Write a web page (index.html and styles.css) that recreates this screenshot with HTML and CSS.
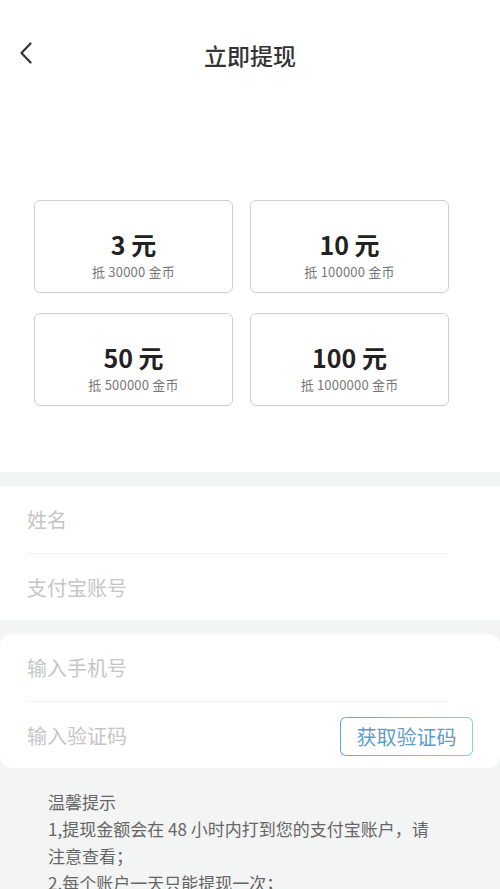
FILE: index.html
```html
<!DOCTYPE html>
<html lang="zh-CN">
<head>
<meta charset="utf-8">
<title>立即提现</title>
<link rel="stylesheet" href="styles.css">
</head>
<body>
<div class="page">
  <header class="header">
    <span class="back">
      <svg width="14" height="22" viewBox="0 0 14 22"><path d="M11.5 1.5 L2.5 11 L11.5 20.5" fill="none" stroke="#333" stroke-width="2.2" stroke-linecap="round" stroke-linejoin="round"/></svg>
    </span>
    <h1 class="title">立即提现</h1>
  </header>

  <section class="options">
    <div class="grid">
      <div class="card"><div class="amount">3 元</div><div class="coins">抵 30000 金币</div></div>
      <div class="card"><div class="amount">10 元</div><div class="coins">抵 100000 金币</div></div>
      <div class="card"><div class="amount">50 元</div><div class="coins">抵 500000 金币</div></div>
      <div class="card"><div class="amount">100 元</div><div class="coins">抵 1000000 金币</div></div>
    </div>
  </section>

  <section class="form">
    <div class="row"><span class="ph">姓名</span></div>
    <div class="row"><span class="ph">支付宝账号</span></div>
  </section>

  <section class="form rounded">
    <div class="row"><span class="ph">输入手机号</span></div>
    <div class="row"><span class="ph">输入验证码</span><span class="code-btn">获取验证码</span></div>
  </section>

  <section class="tips">
    <p>温馨提示</p>
    <p>1,提现金额会在 48 小时内打到您的支付宝账户，请注意查看；</p>
    <p>2,每个账户一天只能提现一次；</p>
  </section>
</div>
</body>
</html>
```

FILE: styles.css
```css
* { box-sizing: border-box; }
html, body { margin: 0; padding: 0; }
body {
  background: #f3f4f4;
  font-family: "Noto Sans CJK SC", "Noto Sans", sans-serif;
  width: 500px;
  height: 889px;
  overflow: hidden;
}
.page { display: flex; flex-direction: column; }

.header {
  position: relative;
  height: 110px;
  background: #fff;
  display: flex;
  align-items: center;
  justify-content: center;
}
.back {
  position: absolute;
  left: 19px;
  top: 42px;
  width: 14px;
  height: 22px;
  display: flex;
}
.title {
  margin: 0;
  font-size: 23px;
  font-weight: 500;
  color: #333;
  line-height: 1;
}

.options {
  background: #fff;
  padding: 90px 0 66px 34px;
}
.grid {
  display: grid;
  grid-template-columns: 199px 199px;
  column-gap: 17px;
  row-gap: 20px;
}
.card {
  height: 93px;
  border: 1px solid #cfcfcf;
  border-radius: 6px;
  display: flex;
  flex-direction: column;
  align-items: center;
  justify-content: flex-start;
  padding-top: 25px;
}
.amount {
  font-size: 25px;
  font-weight: 600;
  color: #222;
  line-height: 36px;
}
.coins {
  font-size: 13px;
  color: #777;
  line-height: 19px;
  letter-spacing: 0.2px;
}

.form {
  background: #fff;
  margin-top: 14px;
  padding: 0 53px 0 27px;
}
.form.rounded { border-radius: 12px; }
.row {
  height: 67px;
  display: flex;
  align-items: center;
  justify-content: space-between;
  position: relative;
}
.row + .row { border-top: 1px solid #f1f1f1; }
.ph {
  font-size: 20px;
  color: #c6c6c6;
}
.code-btn {
  position: relative;
  margin-right: -26px;
  width: 133px;
  height: 39px;
  border: 1.5px solid transparent;
  border-radius: 6px;
  background: linear-gradient(#fff, #fff) padding-box,
              linear-gradient(90deg, #62aadf, #86d8c8) border-box;
  color: #5f9cc9;
  font-size: 20px;
  display: flex;
  align-items: center;
  justify-content: center;
  top: 1px;
}

.tips {
  padding: 20px 62px 0 48px;
  color: #666;
  font-size: 17px;
  line-height: 27px;
}
.tips p { margin: 0; }
```
